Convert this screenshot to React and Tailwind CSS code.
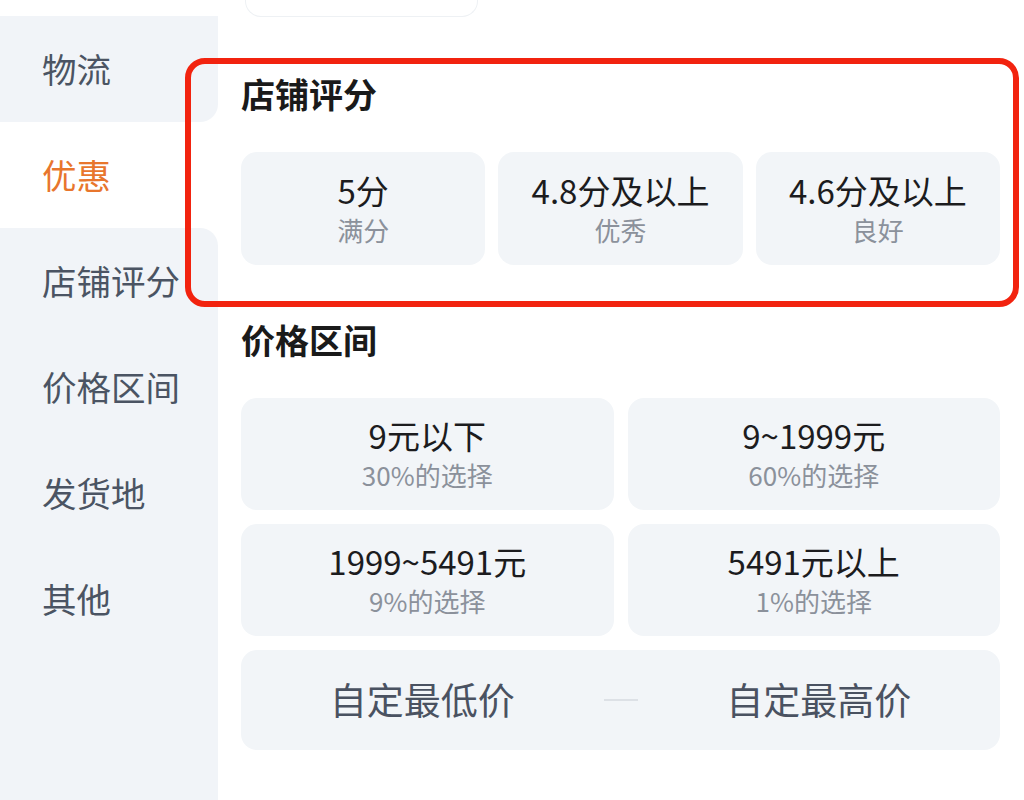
import React from 'react';

const SIDE_ITEMS = ['物流', '优惠', '店铺评分', '价格区间', '发货地', '其他'];
const ACTIVE = 1;

const SCORES = [
  { main: '5分', sub: '满分' },
  { main: '4.8分及以上', sub: '优秀' },
  { main: '4.6分及以上', sub: '良好' },
];

const PRICES = [
  { main: '9元以下', sub: '30%的选择' },
  { main: '9~1999元', sub: '60%的选择' },
  { main: '1999~5491元', sub: '9%的选择' },
  { main: '5491元以上', sub: '1%的选择' },
];

const font = { fontFamily: '"Noto Sans CJK SC", "Noto Sans", sans-serif' };

const OptionCard = ({ main, sub, height }) => (
  <div className={`${height} rounded-[16px] bg-[#f2f5f8] flex flex-col items-center justify-center`}>
    <span className="text-[33px] leading-[36px] text-[#1c1c1e]">{main}</span>
    <span className="mt-[6px] text-[26px] leading-[32px] text-[#8b919b]">{sub}</span>
  </div>
);

export default function App() {
  return (
    <div className="relative w-[1024px] h-[800px] overflow-hidden bg-white flex" style={font}>
      {/* left category rail */}
      <div className="w-[218px] shrink-0 flex flex-col bg-white">
        <div className="h-[16px]" />
        {SIDE_ITEMS.map((label, i) => {
          const active = i === ACTIVE;
          const rounded = i === ACTIVE - 1 ? 'rounded-br-[18px]' : i === ACTIVE + 1 ? 'rounded-tr-[18px]' : '';
          return (
            <div
              key={label}
              className={`h-[106px] flex items-center pl-[42px] text-[34.5px] ${
                active ? 'bg-white text-[#e8762d]' : `bg-[#f1f4f8] text-[#4b5463] ${rounded}`
              }`}
            >
              {label}
            </div>
          );
        })}
        <div className="flex-1 bg-[#f1f4f8]" />
      </div>

      {/* filter panel */}
      <div className="flex-1 pl-[23px] pr-[24px] flex flex-col">
        <div className="ml-[4px] w-[233px] h-[17px] rounded-b-[16px] border-x border-b border-[#eef1f4] bg-white" />

        <h2 className="mt-[57px] text-[34px] leading-[40px] font-bold text-[#1a1a1a]">店铺评分</h2>
        <div className="mt-[38px] grid grid-cols-3 gap-[13px]">
          {SCORES.map((s) => (
            <OptionCard key={s.main} main={s.main} sub={s.sub} height="h-[113px]" />
          ))}
        </div>

        <h2 className="mt-[55px] text-[34px] leading-[40px] font-bold text-[#1a1a1a]">价格区间</h2>
        <div className="mt-[38px] grid grid-cols-2 gap-[14px]">
          {PRICES.map((p) => (
            <OptionCard key={p.main} main={p.main} sub={p.sub} height="h-[112px]" />
          ))}
        </div>

        <div className="mt-[14px] h-[100px] rounded-[16px] bg-[#f2f5f8] flex items-center">
          <span className="flex-1 text-center text-[37px] text-[#4a5261]">自定最低价</span>
          <span className="w-[34px] h-[2px] bg-[#dde1e6]" />
          <span className="flex-1 text-center text-[37px] text-[#4a5261]">自定最高价</span>
        </div>
      </div>

      {/* red highlight annotation */}
      <div className="absolute left-[185px] top-[58px] w-[834px] h-[249px] rounded-[20px] border-[6px] border-[#f2230f] pointer-events-none" />
    </div>
  );
}
